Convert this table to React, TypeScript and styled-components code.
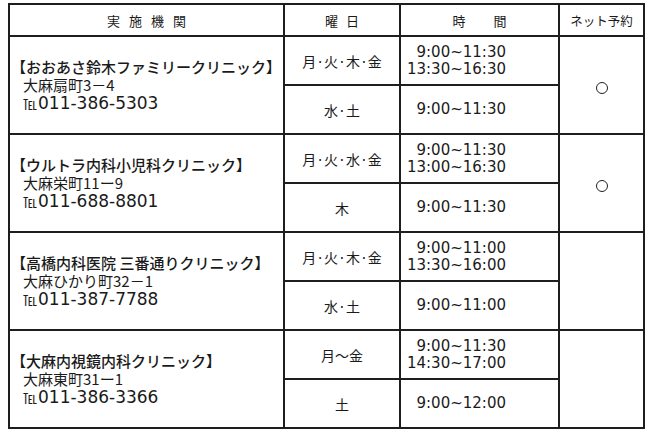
import React from 'react';
import styled, { createGlobalStyle } from 'styled-components';

interface Slot {
  days: string;
  times: string[];
}

interface Clinic {
  name: string;
  address: string;
  tel: string;
  net: boolean;
  slots: [Slot, Slot];
}

const clinics: Clinic[] = [
  {
    name: '【おおあさ鈴木ファミリークリニック】',
    address: '大麻扇町3－4',
    tel: '011-386-5303',
    net: true,
    slots: [
      { days: '月·火·木·金', times: ['9:00~11:30', '13:30~16:30'] },
      { days: '水·土', times: ['9:00~11:30'] },
    ],
  },
  {
    name: '【ウルトラ内科小児科クリニック】',
    address: '大麻栄町11ー9',
    tel: '011-688-8801',
    net: true,
    slots: [
      { days: '月·火·水·金', times: ['9:00~11:30', '13:00~16:30'] },
      { days: '木', times: ['9:00~11:30'] },
    ],
  },
  {
    name: '【高橋内科医院 三番通りクリニック】',
    address: '大麻ひかり町32－1',
    tel: '011-387-7788',
    net: false,
    slots: [
      { days: '月·火·木·金', times: ['9:00~11:00', '13:30~16:00'] },
      { days: '水·土', times: ['9:00~11:00'] },
    ],
  },
  {
    name: '【大麻内視鏡内科クリニック】',
    address: '大麻東町31ー1',
    tel: '011-386-3366',
    net: false,
    slots: [
      { days: '月～金', times: ['9:00~11:30', '14:30~17:00'] },
      { days: '土', times: ['9:00~12:00'] },
    ],
  },
];

export default function App() {
  return (
    <>
      <GlobalStyle />
      <Table>
        <colgroup>
          <col style={{ width: 275 }} />
          <col style={{ width: 116 }} />
          <col style={{ width: 159 }} />
          <col style={{ width: 85 }} />
        </colgroup>
        <thead>
          <HeadRow>
            <Th>
              <Spaced gap={9}>実施機関</Spaced>
            </Th>
            <Th>
              <Spaced gap={8}>曜日</Spaced>
            </Th>
            <Th>
              <Spaced gap={28}>時間</Spaced>
            </Th>
            <Th small>ネット予約</Th>
          </HeadRow>
        </thead>
        <tbody>
          {clinics.map((c) => (
            <React.Fragment key={c.name}>
              <SlotRow>
                <ClinicCell rowSpan={2}>
                  <Name>{c.name}</Name>
                  <Address>{c.address}</Address>
                  <Tel>
                    <TelMark>℡</TelMark>
                    {c.tel}
                  </Tel>
                </ClinicCell>
                <DayCell>{c.slots[0].days}</DayCell>
                <TimeCell>
                  {c.slots[0].times.map((t) => (
                    <TimeLine key={t}>{t}</TimeLine>
                  ))}
                </TimeCell>
                <NetCell rowSpan={2}>{c.net ? <Circle /> : null}</NetCell>
              </SlotRow>
              <SlotRow>
                <DayCell>{c.slots[1].days}</DayCell>
                <TimeCell>
                  {c.slots[1].times.map((t) => (
                    <TimeLine key={t}>{t}</TimeLine>
                  ))}
                </TimeCell>
              </SlotRow>
            </React.Fragment>
          ))}
        </tbody>
      </Table>
    </>
  );
}

const GlobalStyle = createGlobalStyle`
  html, body {
    margin: 0;
    padding: 0;
    background: #fff;
  }
  body {
    font-family: "Noto Sans CJK JP", "Noto Sans", sans-serif;
    color: #1a1a1a;
  }
`;

const Table = styled.table`
  margin: 3px 0 0 8px;
  width: 635px;
  table-layout: fixed;
  border-collapse: collapse;
  border: 2px solid #111;
`;

const HeadRow = styled.tr`
  height: 32px;
`;

const Th = styled.th<{ small?: boolean }>`
  border: 2px solid #1e1e1e;
  padding: 0;
  font-weight: 400;
  font-size: ${(p) => (p.small ? '12.5px' : '13px')};
  text-align: center;
  vertical-align: middle;
`;

const Spaced = styled.span<{ gap: number }>`
  letter-spacing: ${(p) => p.gap}px;
  padding-left: ${(p) => p.gap}px;
`;

const SlotRow = styled.tr`
  height: 49px;
`;

const Cell = styled.td`
  border: 2px solid #1e1e1e;
  padding: 0;
  vertical-align: middle;
`;

const ClinicCell = styled(Cell)`
  padding: 0 0 0 1px;
`;

const Name = styled.div`
  font-size: 15px;
  line-height: 18px;
  font-weight: 500;
  white-space: nowrap;
`;

const Address = styled.div`
  padding-left: 12px;
  font-size: 15px;
  line-height: 17px;
  white-space: nowrap;
`;

const Tel = styled.div`
  padding-left: 12px;
  font-family: "DejaVu Sans", sans-serif;
  font-size: 17px;
  line-height: 20px;
  white-space: nowrap;
`;

const TelMark = styled.span`
  font-family: "Noto Sans CJK JP", sans-serif;
  font-size: 14px;
  margin-right: 1px;
`;

const DayCell = styled(Cell)`
  text-align: center;
  font-size: 14px;
`;

const TimeCell = styled(Cell)`
  text-align: right;
  padding-right: 52px;
  font-family: "DejaVu Sans", sans-serif;
  font-size: 15px;
  line-height: 17px;
`;

const TimeLine = styled.div`
  white-space: nowrap;
`;

const NetCell = styled(Cell)`
  text-align: center;
`;

const Circle = styled.span`
  display: inline-block;
  width: 10px;
  height: 10px;
  border: 1.3px solid #222;
  border-radius: 50%;
  vertical-align: middle;
`;
